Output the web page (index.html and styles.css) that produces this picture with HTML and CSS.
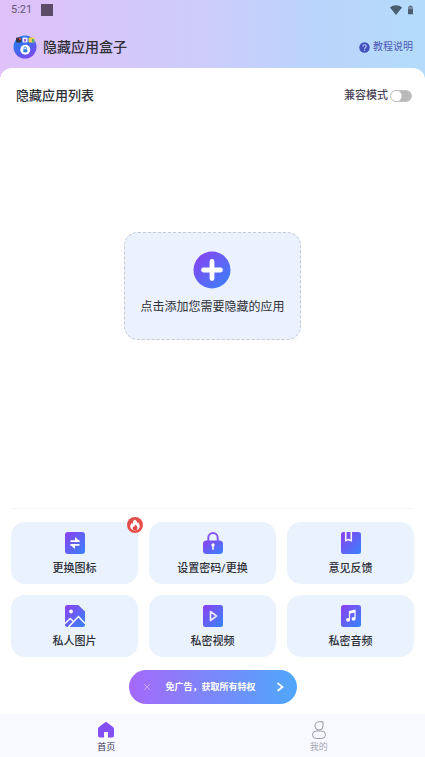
FILE: index.html
```html
<!DOCTYPE html>
<html lang="zh-CN">
<head>
<meta charset="utf-8">
<meta name="viewport" content="width=device-width, initial-scale=1">
<title>隐藏应用盒子</title>
<link rel="stylesheet" href="styles.css">
</head>
<body>
<svg class="defs" aria-hidden="true">
  <defs>
    <linearGradient id="brand" x1="0" y1="0" x2="1" y2="1">
      <stop offset="0.1" stop-color="#8546f2"/>
      <stop offset="0.9" stop-color="#3f7dfa"/>
    </linearGradient>
    <linearGradient id="logo" x1="0" y1="0" x2="0.6" y2="1">
      <stop offset="0" stop-color="#2187f0"/>
      <stop offset="0.5" stop-color="#3a6cf0"/>
      <stop offset="1" stop-color="#7a49ea"/>
    </linearGradient>
    <linearGradient id="hot" x1="0" y1="0" x2="1" y2="1">
      <stop offset="0" stop-color="#d94b48"/>
      <stop offset="1" stop-color="#f2514a"/>
    </linearGradient>
  </defs>
</svg>
<div class="app">
  <header class="top">
    <div class="status">
      <span class="clock">5:21</span>
      <span class="notice"></span>
      <svg class="wifi" viewBox="0 0 12 10"><path d="M0 2.6C3.4-.5 8.6-.5 12 2.6L6 10z"/></svg>
      <svg class="battery" viewBox="0 0 6 10"><path d="M1.6 0h2.8v1.2H6V10H0V1.2h1.6z"/><path class="level" d="M0 1.2h6V4H0z"/></svg>
    </div>
    <div class="titlebar">
      <svg class="logo" viewBox="0 0 24 24">
        <circle cx="12" cy="12" r="11.5" fill="url(#logo)"/>
        <rect x="3" y="2.500" width="5.500" height="5" rx="1" fill="#3a3340"/>
        <rect x="6" y="3" width="2" height="2" fill="#c5473f"/>
        <rect x="9.500" y="2.500" width="5" height="5" rx="1" fill="#f2eefb"/>
        <rect x="11" y="4" width="2" height="2.500" fill="#a65ad0"/>
        <rect x="15.500" y="2.500" width="6" height="5" rx="1" fill="#edcf4a"/>
        <rect x="19" y="4" width="2" height="3" fill="#4cae73"/>
        <circle cx="12.300" cy="14.800" r="5" fill="#fff"/>
        <rect x="10.300" y="14.300" width="4" height="3" rx=".6" fill="#287ee8"/>
        <path d="M11 14.300v-1a1.300 1.300 0 0 1 2.600 0v1" fill="none" stroke="#287ee8" stroke-width=".9"/>
      </svg>
      <h1>隐藏应用盒子</h1>
      <a class="help" href="#help">
        <svg viewBox="0 0 12 12"><circle cx="6" cy="6" r="5.700" fill="#4351bd"/><path d="M4.200 4.900C4.200 2.500 7.900 2.500 7.900 4.800 7.900 6.200 6 6 6 7.500" fill="none" stroke="#c3d3fb" stroke-width="1.100"/><circle cx="6" cy="9" r=".7" fill="#c3d3fb"/></svg>
        <span>教程说明</span>
      </a>
    </div>
  </header>

  <main class="panel">
    <div class="list-head">
      <h2>隐藏应用列表</h2>
      <label class="compat"><span>兼容模式</span><input type="checkbox" role="switch"></label>
    </div>

    <div class="stage">
      <button class="add" type="button">
        <svg viewBox="0 0 38 38"><circle cx="19" cy="19" r="18.500" fill="url(#brand)"/><path d="M19 10.500v17M10.500 19h17" stroke="#fff" stroke-width="4.800" stroke-linecap="round"/></svg>
        <span>点击添加您需要隐藏的应用</span>
      </button>
    </div>

    <div class="tools">
      <button class="tool" type="button">
        <svg viewBox="0 0 20 22"><rect width="20" height="22" rx="3" fill="url(#brand)"/><path d="M5.500 9.200h9M14.500 12.800h-9" stroke="#fff" stroke-width="1.800"/><path d="M10 5v4.500h5zM10 17v-4.500H5z" fill="#fff"/></svg>
        <span>更换图标</span>
        <svg class="hot" viewBox="0 0 16 16"><circle cx="8" cy="8" r="8" fill="url(#hot)"/><path d="M7.500 2.500c2.600 1 2.700 2.900 3 3.900l.8-.8c1.500 2 2.200 4.500.4 6.400-1.900 1.900-5.500 1.900-7.400 0-1.700-1.700-1.300-4.200.5-5.900.2.700.5 1 .9 1.200C5.700 5.500 6.200 3.800 7.500 2.500z" fill="#fff"/><path d="M8.300 7.500c1.500 1.200 2.200 2.400 2.200 3.600a2.400 2.400 0 0 1-4.900 0c0-.8.300-1.300.8-1.700l.9.600c0-1 .4-1.800 1-2.500z" fill="#e34b4a"/></svg>
      </button>
      <button class="tool" type="button">
        <svg viewBox="0 0 20 22"><path d="M5.300 10V5.700a4.700 4.700 0 0 1 9.400 0V10" fill="none" stroke="#8050f2" stroke-width="1.900"/><rect y="8.500" width="20" height="13.500" rx="3.500" fill="url(#brand)"/><path d="M10 13.300v4" stroke="#fff" stroke-width="1.500" stroke-linecap="round"/><circle cx="10" cy="13" r="1.700" fill="#fff"/></svg>
        <span>设置密码/更换</span>
      </button>
      <button class="tool" type="button">
        <svg viewBox="0 0 20 22"><rect width="20" height="22" rx="2.500" fill="url(#brand)"/><path d="M4.700 0v8.700L7.500 7.600l2.800 1.100V0" fill="#7b52f3" stroke="#fff" stroke-width="1.500"/></svg>
        <span>意见反馈</span>
      </button>
      <button class="tool" type="button">
        <svg viewBox="0 0 20 22"><path d="M2.500 0h10.700L20 6.500V19.500a2.500 2.500 0 0 1-2.500 2.500h-15A2.500 2.500 0 0 1 0 19.500v-17A2.500 2.500 0 0 1 2.500 0z" fill="url(#brand)"/><circle cx="6" cy="6.500" r="1.900" fill="#fff"/><path d="M0 18.500l5.200-5 3.300 3M3.500 22l10-10.500L20 18.500" fill="none" stroke="#fff" stroke-width="1.500"/></svg>
        <span>私人图片</span>
      </button>
      <button class="tool" type="button">
        <svg viewBox="0 0 20 22"><rect width="20" height="22" rx="2.500" fill="url(#brand)"/><path d="M7.500 6.500l6 4.500-6 4.500z" fill="none" stroke="#e9e6ff" stroke-width="1.700" stroke-linejoin="round"/></svg>
        <span>私密视频</span>
      </button>
      <button class="tool" type="button">
        <svg viewBox="0 0 20 22"><rect width="20" height="22" rx="2.500" fill="url(#brand)"/><path d="M8.500 14.500V6.500l5.500-1.300V13.500" fill="none" stroke="#fff" stroke-width="1.200"/><path d="M8.500 6.500L14 5.200v2.300L8.500 8.800z" fill="#fff"/><ellipse cx="7.100" cy="14.800" rx="2" ry="1.900" fill="#fff"/><ellipse cx="12.600" cy="13.800" rx="2" ry="1.900" fill="#fff"/></svg>
        <span>私密音频</span>
      </button>
    </div>

    <div class="promo">
      <button class="close" type="button" aria-label="关闭"><svg viewBox="0 0 8 8"><path d="M1 1l6 6M7 1L1 7" fill="none" stroke="#cba8ff" stroke-width="1"/></svg></button>
      <a href="#vip"><span>免广告，获取所有特权</span><svg viewBox="0 0 8 10"><path d="M1.500 1L6.500 5l-5 4" fill="none" stroke="#fff" stroke-width="1.700"/></svg></a>
    </div>
  </main>

  <nav class="tabs">
    <a class="current" href="#home">
      <svg viewBox="0 0 18 18"><path d="M7.600 1.700a2.100 2.100 0 0 1 2.800 0l5.600 4.300c.7.600 1 1.200 1 2V14.500a2 2 0 0 1-2 2h-4V11H7v5.500H3a2 2 0 0 1-2-2V8c0-.8.300-1.400 1-2z" fill="#834ef2"/></svg>
      <span>首页</span>
    </a>
    <a href="#me">
      <svg viewBox="0 0 18 18"><path d="M13 .7V5A4 4 0 0 1 5 5C5 2.200 6.800.7 9.500.7z" fill="none" stroke="#8f9098" stroke-width=".9"/><rect x="2.500" y="10" width="13" height="7.500" rx="3.700" fill="none" stroke="#8f9098" stroke-width=".9"/></svg>
      <span>我的</span>
    </a>
  </nav>
</div>
</body>
</html>
```
FILE: styles.css
```css
* {
  box-sizing: border-box;
}

body {
  margin: 0;
  font-family: Roboto, "Noto Sans CJK SC", sans-serif;
  color: #2e3038;
}

.defs {
  position: absolute;
  width: 0;
  height: 0;
}

button {
  padding: 0;
  border: 0;
  background: none;
  color: inherit;
  font: inherit;
  cursor: pointer;
}

a {
  color: inherit;
  text-decoration: none;
}

svg {
  display: block;
  flex: none;
}

h1,
h2 {
  margin: 0;
  font-weight: 500;
}

.app {
  display: flex;
  flex-direction: column;
  min-height: 100vh;
  background: linear-gradient(90deg, #e0c1fa 0, #cccdfb 50%, #bad5fb 75%, #b4dcfa 100%) no-repeat 0 0 / 100% 100px;
}

.status {
  display: flex;
  align-items: center;
  height: 20px;
  padding: 0 12px 0 11px;
}

.clock {
  color: #67567a;
  font-size: 11px;
  line-height: 20px;
}

.notice {
  width: 12px;
  height: 12px;
  margin-left: 9px;
  background: #5c4c68;
}

.wifi {
  width: 12px;
  height: 10px;
  margin-left: auto;
  fill: #4b5e70;
}

.battery {
  width: 5px;
  height: 10px;
  margin-left: 6px;
  fill: #4b5e70;
}

.battery .level {
  fill: #7a8da2;
}

.titlebar {
  display: flex;
  align-items: center;
  height: 48px;
  padding: 6px 12px 0 13px;
}

.logo {
  width: 24px;
  height: 24px;
}

h1 {
  margin-left: 6px;
  font-size: 14px;
  line-height: 20px;
}

.help {
  display: flex;
  align-items: center;
  gap: 3px;
  margin-left: auto;
  color: #4d58b5;
  font-size: 10px;
  line-height: 16px;
}

.help svg {
  width: 11px;
  height: 11px;
}

.panel {
  display: flex;
  flex: 1;
  flex-direction: column;
  border-radius: 12px 12px 0 0;
  background: #fff;
}

.list-head {
  display: flex;
  align-items: center;
  justify-content: space-between;
  height: 56px;
  padding: 0 13px 0 16px;
}

h2 {
  font-size: 13px;
  line-height: 20px;
}

.compat {
  display: flex;
  align-items: center;
  gap: 2px;
  color: #4a4259;
  font-size: 11px;
  font-weight: 500;
  line-height: 16px;
}

.compat input {
  width: 22px;
  height: 12px;
  margin: 0;
  border: 1px solid #c4c4c4;
  border-radius: 6px;
  background: radial-gradient(circle at 5px 50%, #fff 5px, transparent 6px) #b9b9b9;
  appearance: none;
}

.compat input:checked {
  border-color: #834ef2;
  background: radial-gradient(circle at 15px 50%, #fff 5px, transparent 6px) #834ef2;
}

.stage {
  display: flex;
  flex: 1;
  align-items: center;
  justify-content: center;
  margin: 0 11px;
  padding-bottom: 60px;
  border-bottom: 1px solid #f4f4f7;
}

.add {
  display: flex;
  flex-direction: column;
  align-items: center;
  gap: 9px;
  padding: 18px 15px 23px;
  border: 1px dashed #c3cad9;
  border-radius: 14px;
  background: #ebf2fe;
  font-size: 12px;
  line-height: 18px;
}

.add svg {
  width: 38px;
  height: 38px;
}

.tools {
  display: grid;
  grid-template-columns: repeat(3, 1fr);
  gap: 11px;
  padding: 13px 11px;
}

.tool {
  display: flex;
  position: relative;
  flex-direction: column;
  align-items: center;
  gap: 6px;
  height: 62px;
  padding-top: 10px;
  border-radius: 14px;
  background: #eaf2fe;
  font-size: 11px;
  font-weight: 500;
  line-height: 18px;
}

.tool svg {
  width: 20px;
  height: 22px;
}

.tool .hot {
  position: absolute;
  top: -5px;
  right: -5px;
  width: 16px;
  height: 16px;
}

.promo {
  display: flex;
  align-items: center;
  align-self: center;
  width: 168px;
  height: 34px;
  margin-bottom: 10px;
  padding: 0 13px;
  border-radius: 17px;
  background: linear-gradient(90deg, #a569fa, #4fa7fb);
  color: #fff;
  font-size: 9px;
  font-weight: 700;
  line-height: 16px;
}

.promo a {
  display: flex;
  flex: 1;
  align-items: center;
  justify-content: space-between;
  padding-left: 14px;
}

.close svg {
  width: 10px;
  height: 8px;
}

.promo a svg {
  width: 8px;
  height: 10px;
}

.tabs {
  display: flex;
  height: 43px;
  background: #f8f9ff;
  color: #a7a8b4;
  font-size: 9px;
  line-height: 14px;
}

.tabs a {
  display: flex;
  flex: 1;
  flex-direction: column;
  align-items: center;
  gap: 1px;
  padding-top: 7px;
}

.tabs svg {
  width: 18px;
  height: 18px;
}

.tabs .current {
  color: #373456;
}
```
